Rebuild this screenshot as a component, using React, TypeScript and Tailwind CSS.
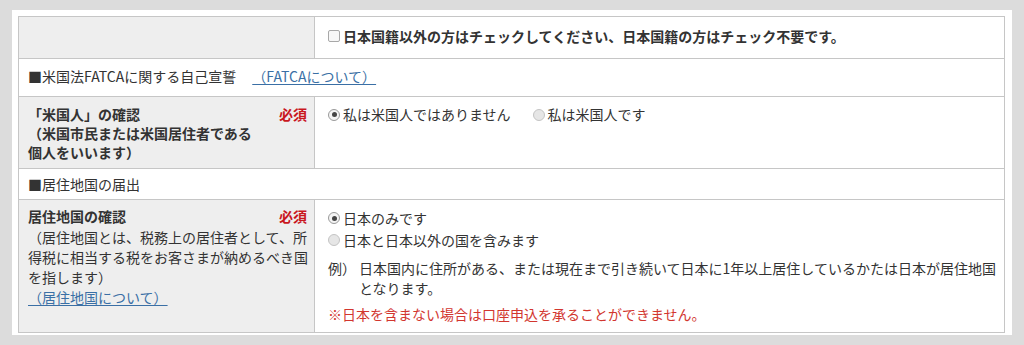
const Radio = ({ checked }: { checked?: boolean }) => (
  <span
    className={`inline-flex items-center justify-center w-[12px] h-[12px] rounded-full border mr-[3px] shrink-0 ${
      checked ? "border-[#9a9a9a] bg-[#f4f4f4]" : "border-[#c4c4c4] bg-[#e6e6e6]"
    }`}
  >
    {checked && <span className="w-[5px] h-[5px] rounded-full bg-[#444]" />}
  </span>
);

const Required = () => <span className="font-bold text-[#c9171e] shrink-0">必須</span>;

export default function App() {
  return (
    <div
      className="w-[1024px] h-[345px] bg-[#dcdcdc] pt-[10px] pl-[12px] text-[14px] text-[#333]"
      style={{ fontFamily: '"Noto Sans CJK JP", "Noto Sans", sans-serif' }}
    >
      <div className="w-[1000px] bg-white pt-[6px] pl-[6px] pb-[2px]">
        <div className="w-[987px] border-t border-l border-[#c6c6c6]">
          {/* row 1 */}
          <div className="flex h-[42px] border-b border-[#c6c6c6]">
            <div className="w-[296px] bg-[#eeeeee] border-r border-[#c6c6c6]" />
            <div className="flex-1 flex items-center pl-[13px] pb-[3px] border-r border-[#c6c6c6] font-bold leading-[20px]">
              <span className="inline-block w-[12px] h-[12px] border border-[#a8a8a8] rounded-[2px] bg-[#f7f7f7] mr-[3px]" />
              日本国籍以外の方はチェックしてください、日本国籍の方はチェック不要です。
            </div>
          </div>

          {/* row 2 */}
          <div className="flex items-center h-[38px] pl-[9px] pb-[4px] border-b border-r border-[#c6c6c6] leading-[20px]">
            <span>■米国法FATCAに関する自己宣誓</span>
            <a href="#" className="ml-[16px] text-[#3a6fa5] underline underline-offset-2">
              （FATCAについて）
            </a>
          </div>

          {/* row 3 */}
          <div className="flex h-[72px] border-b border-[#c6c6c6]">
            <div className="w-[296px] bg-[#eeeeee] border-r border-[#c6c6c6] pl-[9px] pr-[7px] pt-[8px] leading-[19px]">
              <div className="flex justify-between font-bold">
                <span>「米国人」の確認</span>
                <Required />
              </div>
              <div className="font-bold">
                （米国市民または米国居住者である
                <br />
                個人をいいます）
              </div>
            </div>
            <div className="flex-1 border-r border-[#c6c6c6] pl-[13px] pt-[8px] leading-[19px]">
              <div className="flex items-center">
                <Radio checked />
                <span>私は米国人ではありません</span>
                <span className="ml-[22px]" />
                <Radio />
                <span>私は米国人です</span>
              </div>
            </div>
          </div>

          {/* row 4 */}
          <div className="flex items-center h-[31px] pl-[9px] border-b border-r border-[#c6c6c6] leading-[20px]">
            ■居住地国の届出
          </div>

          {/* row 5 */}
          <div className="flex h-[133px] border-b border-[#c6c6c6]">
            <div className="w-[296px] bg-[#eeeeee] border-r border-[#c6c6c6] pl-[9px] pr-[7px] pt-[6px] leading-[20px]">
              <div className="flex justify-between font-bold">
                <span>居住地国の確認</span>
                <Required />
              </div>
              <p className="mt-[1px] whitespace-nowrap">
                （居住地国とは、税務上の居住者として、所
                <br />
                得税に相当する税をお客さまが納めるべき国
                <br />
                を指します）
              </p>
              <a href="#" className="text-[#3a6fa5] underline underline-offset-2">
                （居住地国について）
              </a>
            </div>
            <div className="flex-1 border-r border-[#c6c6c6] pl-[13px] pt-[7px] leading-[20px]">
              <div className="flex items-center h-[22px]">
                <Radio checked />
                <span>日本のみです</span>
              </div>
              <div className="flex items-center h-[22px]">
                <Radio />
                <span>日本と日本以外の国を含みます</span>
              </div>
              <div className="flex mt-[7px]">
                <span className="w-[31px] shrink-0">例）</span>
                <span className="w-[640px]">
                  日本国内に住所がある、または現在まで引き続いて日本に1年以上居住しているかたは日本が居住地国となります。
                </span>
              </div>
              <p className="mt-[6px] text-[#d2362f]">
                ※日本を含まない場合は口座申込を承ることができません。
              </p>
            </div>
          </div>
        </div>
      </div>
    </div>
  );
}
